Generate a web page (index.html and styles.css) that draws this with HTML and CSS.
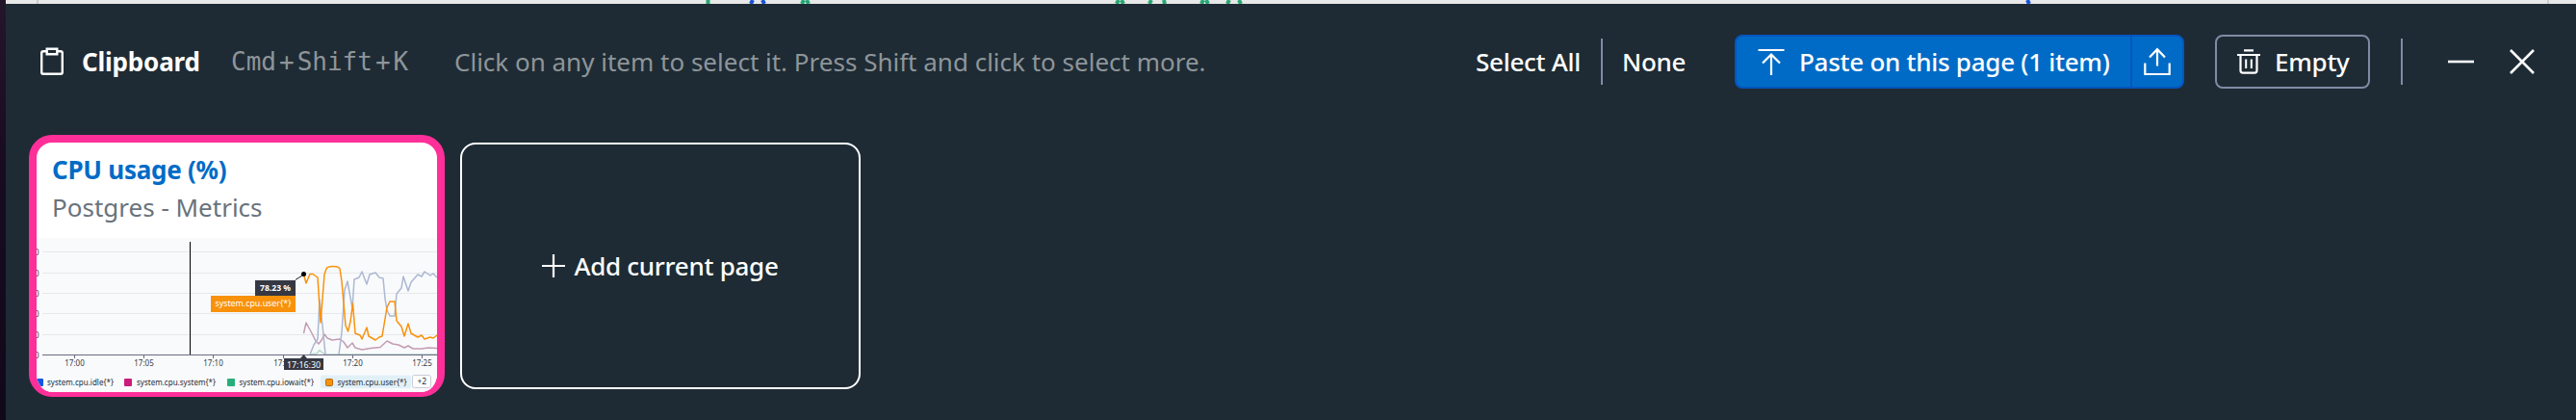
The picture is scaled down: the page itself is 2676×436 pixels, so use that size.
FILE: index.html
```html
<!DOCTYPE html>
<html lang="en">
<head>
<meta charset="utf-8">
<title>Clipboard</title>
<link rel="stylesheet" href="styles.css">
</head>
<body>
<div class="app">
  <div class="rail"></div>
  <div class="main">
    <svg class="backdrop" viewBox="6 0 2670 4" preserveAspectRatio="none">
      <rect x="6" y="0" width="2670" height="4" fill="#e8e8e8"/>
      <path d="M39 0V4M2647 0V4" stroke="#c9ccd6" stroke-width="2"/>
      <path d="M735.500 0V4M833 4L835 0M840 4L838 0M1160 4L1162 0M1167 4L1165 0M1194 4L1196 0M1210 4L1209 0M1248 4L1250 0M1255 4L1253 0M1275 4L1277 0M1289 4L1287 0" fill="none" stroke="#26a874" stroke-width="4"/>
      <path d="M780 4L782 0M794 4L792 0M2106 0L2108 4" fill="none" stroke="#1653dc" stroke-width="4"/>
    </svg>
    <section class="panel">
      <header class="bar">
        <svg class="ico-clip" width="24" height="30" viewBox="0 0 24 30" fill="none" stroke="#fff" stroke-width="2.400"><path d="M6.500 4.200H3Q1.200 4.200 1.200 6V26Q1.200 27.800 3 27.800H21Q22.800 27.800 22.800 26V6Q22.800 4.200 21 4.200H17.500"/><path d="M6.700 1.700H17.300V7.300H6.700Z"/></svg>
        <h1 class="name">Clipboard</h1>
        <div class="keys"><span>Cmd</span><span class="plus">+</span><span>Shift</span><span class="plus">+</span><span>K</span></div>
        <p class="hint">Click on any item to select it. Press Shift and click to select more.</p>
        <nav class="actions">
          <a class="link all">Select All</a>
          <i class="rule"></i>
          <a class="link none">None</a>
          <div class="paste">
            <button class="paste-main"><svg width="28" height="28" viewBox="0 0 28 28" fill="none" stroke="#fff" stroke-width="2.200"><path d="M.500 2H27.500M14 28V7M5 15.500L14 6.500L23 15.500"/></svg><span class="paste-text">Paste on this page (1 item)</span></button>
            <button class="paste-share"><svg width="28" height="30" viewBox="0 0 28 30" fill="none" stroke="#fff" stroke-width="2.200"><path d="M1.300 16.500V28H26.700V16.500M14 19.500V2M6 10.500L14 2.200L22 10.500"/></svg></button>
          </div>
          <button class="empty"><svg width="24" height="26" viewBox="0 0 24 26" fill="none" stroke="#fff" stroke-width="2.200"><path d="M7 1.300H17M0 6H24M3.500 6V22Q3.500 24.700 6 24.700H18Q20.500 24.700 20.500 22V6"/><path d="M9.200 10.500V20M14.800 10.500V20" stroke-width="2"/></svg><span class="empty-text">Empty</span></button>
          <i class="rule last"></i>
          <svg class="ico-min" width="27" height="26" viewBox="0 0 27 26"><path d="M0 13H27" stroke="#fff" stroke-width="2.600"/></svg>
          <svg class="ico-close" width="26" height="26" viewBox="0 0 26 26"><path d="M1 1L25 25M25 1L1 25" stroke="#fff" stroke-width="2.600"/></svg>
        </nav>
      </header>
      <div class="cards">
        <article class="card">
          <h2 class="card-title">CPU usage (%)</h2>
          <p class="card-sub">Postgres - Metrics</p>
          <svg class="chart" width="416" height="160" viewBox="38 247 416 160">
            <rect x="38" y="247" width="416" height="160" fill="#f9fafc"/>
            <path d="M44 261.500H454M44 283.500H454M44 304.500H454M44 325.500H454M44 347.500H454" stroke="#e6e8ea"/>
            <g class="axis"><text x="36" y="264.500">0</text><text x="36" y="286.500">0</text><text x="36" y="307.500">0</text><text x="36" y="328.500">0</text><text x="36" y="350.500">0</text><text x="36" y="371.500">0</text></g>
            <g fill="none" stroke-linejoin="round" stroke-width="1.500">
              <path d="M322 368L329 367L332 363.500L336 367L339 368H454" stroke="#b7d8c8"/>
              <path d="M315.500 346L318 335L324 346L328 354L331 357L334 353L337 347L340 351L345 353L353 352L357 355L361 361L366 356L369 361L376 363L385 361.500L395 360.500L402 354L408 357L414 358L420 361L424 359L429 362L438 362L445 361L454 361.500" stroke="#c39db2"/>
              <path d="M322 368L326 358L330 352L332 311L335 338L338 368M352 368L355 345L358 301L361 292L366 320L368 290L373 288L376 282L381 295L384 285L390 283L394 288L398 289L400 310L402 322L405 328H410L412 305L417 299L419 287L424 302L427 293L434 285L438 287L441 282L447 286L450 284L454 288" stroke="#abb8d1"/>
              <path d="M315.500 285L318 294L322 284.500H325L330 288L333 335L337 285L339 279Q340 276.500 346 276.500T353 279L355 292L359 338L361.500 344L364 334L366.500 315L369 346L374 348L376 352L381 340L383 349L390 353L394 350L397 349L402 319L405 313H410L412 333L417 339L420 349L424 336L427 346L434 350L438 348L441 352L447 350L450 351L454 348" stroke="#f9920b"/>
            </g>
            <path d="M44 368.500H454M77.500 369V372M149.500 369V372M221.500 369V372M294.500 369V372M366.500 369V372M438.500 369V372" stroke="#6c6984" fill="none"/>
            <rect x="197" y="251" width="1" height="117" fill="#000" shape-rendering="crispEdges"/>
            <path d="M307 290.500L315.500 285" stroke="#222"/>
            <circle cx="315.500" cy="284.500" r="2.500"/>
            <rect x="265" y="291" width="42" height="16" fill="#353843"/>
            <rect x="219" y="307" width="88" height="17" fill="#f9920b"/>
            <text class="tip bold" x="270" y="301.700" textLength="32" lengthAdjust="spacingAndGlyphs">78.23 %</text>
            <text class="tip" x="223.500" y="317.500" textLength="79" lengthAdjust="spacingAndGlyphs">system.cpu.user{*}</text>
            <g class="axis mid"><text x="77.500" y="379.500">17:00</text><text x="149.500" y="379.500">17:05</text><text x="221.500" y="379.500">17:10</text><text x="294.500" y="379.500">17:15</text><text x="366.500" y="379.500">17:20</text><text x="438.500" y="379.500">17:25</text></g>
            <path d="M295 372H312L315.500 368L319 372H336V384H295Z" fill="#353843"/>
            <text class="tip" x="298" y="381.500" textLength="35" lengthAdjust="spacingAndGlyphs">17:16:30</text>
            <rect x="333" y="389.500" width="94" height="13.500" rx="2" fill="#e1f0f7"/>
            <rect x="37" y="393" width="8" height="8" rx="1" fill="#1257e0"/>
            <rect x="129" y="393" width="8" height="8" rx="1" fill="#cb1c7b"/>
            <rect x="236" y="393" width="8" height="8" rx="1" fill="#27ae7a"/>
            <rect x="338.500" y="393.500" width="7" height="7" rx="1" fill="#f9920b" stroke="#b8690a"/>
            <g class="legend"><text x="49" y="399.800" textLength="69" lengthAdjust="spacingAndGlyphs">system.cpu.idle{*}</text><text x="142" y="399.800" textLength="82" lengthAdjust="spacingAndGlyphs">system.cpu.system{*}</text><text x="248.500" y="399.800" textLength="77.500" lengthAdjust="spacingAndGlyphs">system.cpu.iowait{*}</text><text x="350.500" y="399.800" textLength="72" lengthAdjust="spacingAndGlyphs">system.cpu.user{*}</text></g>
            <rect x="428.500" y="389.500" width="19" height="13" rx="2" fill="#fff" stroke="#c9cad6"/>
            <text class="legend" x="433.500" y="399">+2</text>
          </svg>
        </article>
        <button class="add"><svg width="24" height="24" viewBox="0 0 24 24"><path d="M0 12H24M12 0V24" stroke="#fff" stroke-width="2.200"/></svg><span class="add-text">Add current page</span></button>
      </div>
    </section>
  </div>
</div>
</body>
</html>
```
FILE: styles.css
```css
* { box-sizing: border-box; margin: 0; padding: 0; }
body { width: 2676px; height: 436px; overflow: hidden; font-family: "Noto Sans", sans-serif; font-size: 26px; color: #fff; }
button { font: inherit; font-weight: 500; letter-spacing: -.27px; color: inherit; background: none; border: 0; text-align: left; }
svg { display: block; flex: none; }
.app { display: flex; width: 2676px; height: 436px; }
.rail { width: 6px; background: linear-gradient(#24162a, #180b20 40%, #10091a); }
.main { flex: 1; display: flex; flex-direction: column; }
.backdrop { width: 2670px; height: 4px; }
.panel { flex: 1; background: #1e2b34; display: flex; flex-direction: column; }
.bar { height: 120px; display: flex; align-items: center; padding-left: 36px; white-space: nowrap; }
.ico-clip { margin-right: 19px; }
.name { width: 155px; font-size: 26px; font-weight: 700; letter-spacing: -.2px; line-height: 36px; }
.keys { width: 232px; display: flex; gap: 3px; font-family: "DejaVu Sans Mono", monospace; font-size: 26px; color: #8e959a; }
.hint { width: 1061px; color: #8e959a; line-height: 36px; }
.actions { display: flex; align-items: center; font-weight: 500; letter-spacing: -.27px; }
.link { line-height: 36px; }
.all { width: 130px; }
.none { width: 117px; }
.rule { width: 2px; height: 48px; background: #7f8ba5; margin-right: 20px; }
.paste { display: flex; width: 467px; height: 56px; border: 2px solid #0455bf; border-radius: 8px; background: #006bc6; margin-right: 32px; }
.paste-main { width: 411px; display: flex; align-items: center; gap: 15px; padding-left: 22px; border-right: 2px solid #0455bf; }
.paste-share { flex: 1; display: flex; align-items: center; justify-content: center; }
.empty { width: 161px; height: 56px; display: flex; align-items: center; gap: 15px; padding-left: 21px; border: 2px solid #7f8ba5; border-radius: 8px; margin-right: 32px; }
.last { margin-right: 47px; }
.ico-min { margin-right: 37px; }
.cards { display: flex; padding: 16px 24px; gap: 16px; }
.card { width: 432px; height: 272px; border: 8px solid #ff2f99; border-bottom-width: 5px; border-radius: 24px; background: #fff; overflow: hidden; display: flex; flex-direction: column; }
.card-title { padding: 10px 16px 0; font-size: 26px; line-height: 36px; font-weight: 700; letter-spacing: -.25px; color: #006bc6; }
.card-sub { padding: 3px 16px 0; height: 53px; line-height: 36px; color: #69737c; }
.add { width: 416px; height: 256px; margin-top: 8px; border: 2px solid #fff; border-radius: 16px; display: flex; align-items: center; justify-content: center; gap: 9px; }
.axis { font-size: 8px; fill: #333b46; }
.mid { text-anchor: middle; }
.tip { font-size: 8.500px; fill: #fff; }
.bold { font-weight: 700; }
.legend { font-size: 8.500px; fill: #1c2b34; }
```
